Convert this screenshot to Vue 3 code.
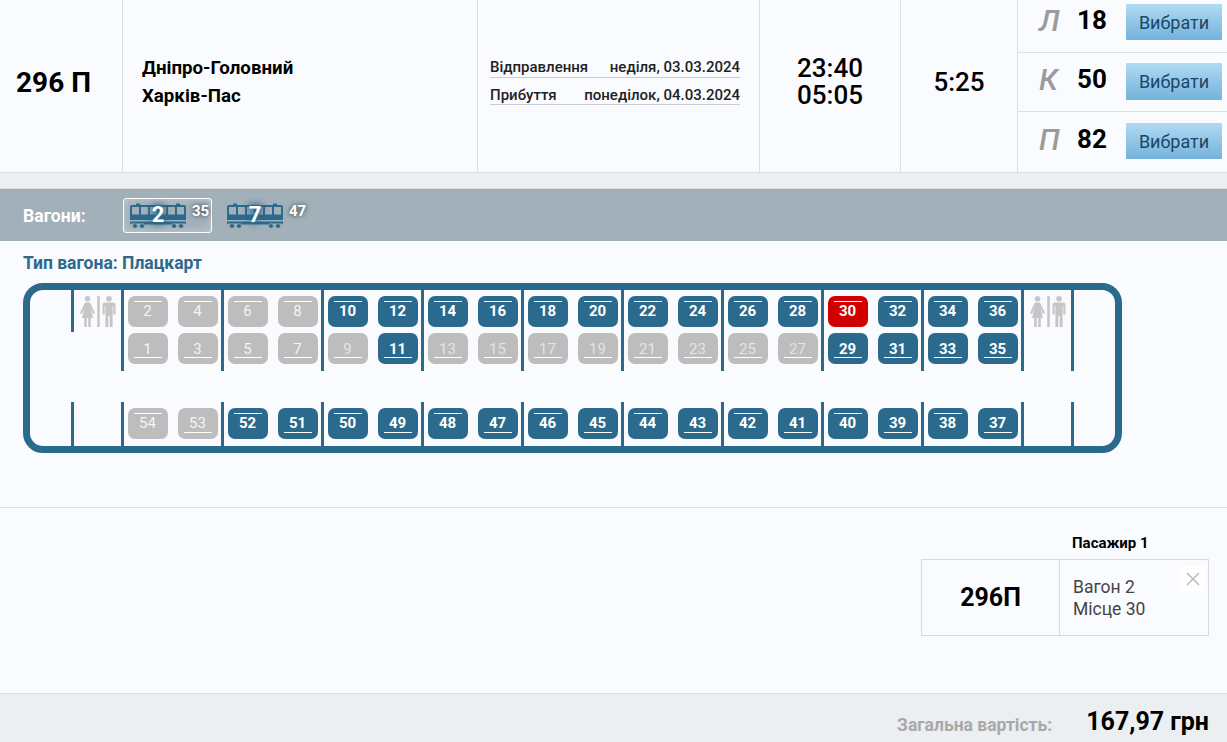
<template>
  <div class="page">
    <div class="train-row">
      <div class="cell num">296 П</div>
      <div class="cell route">
        <div>Дніпро-Головний</div>
        <div>Харків-Пас</div>
      </div>
      <div class="cell dates">
        <div class="date-line"><span>Відправлення</span><span>неділя, 03.03.2024</span></div>
        <div class="date-line"><span>Прибуття</span><span>понеділок, 04.03.2024</span></div>
      </div>
      <div class="cell times">
        <div>23:40</div>
        <div>05:05</div>
      </div>
      <div class="cell duration">5:25</div>
      <div class="classes">
        <div v-for="c in classes" :key="c.name" class="class-row" :class="c.cls">
          <span class="class-name">{{ c.name }}</span>
          <span class="class-count">{{ c.count }}</span>
          <button class="pick-btn">Вибрати</button>
        </div>
      </div>
    </div>
    <div class="gap-band"></div>

    <div class="wagons-bar">
      <span class="wagons-label">Вагони:</span>
      <div v-for="w in wagons" :key="w.num" class="wagon" :class="{ active: w.active }">
        <svg class="wagon-icon" width="56" height="25" viewBox="0 0 56 25">
          <path fill="#2c6a8d" fill-rule="evenodd" d="M2 2 L6 2 L6 0.5 L10 0.5 L10 2 L46 2 L46 0.5 L50 0.5 L50 2 L54 2 Q56 2 56 4 L56 17 L0 17 L0 4 Q0 2 2 2 Z M2 4 V11.5 H9 V4 Z M11 4 V11.5 H18 V4 Z M20 4 V11.5 H27 V4 Z M29 4 V11.5 H36 V4 Z M38 4 V11.5 H45 V4 Z M47 4 V11.5 H54 V4 Z" />
          <path fill="#2c6a8d" d="M0 18.5 H56 V21.5 L55 20.5 H1 L0 21.5 Z M14 20 H42 V21.5 H14 Z" />
          <circle v-for="x in [5, 12, 44, 51]" :key="x" :cx="x" cy="23" r="2" fill="#2c6a8d" />
          <rect v-for="x in [2.5, 9.5, 41.5, 48.5]" :key="'r' + x" :x="x" y="22.5" width="5" height="1" fill="#2c6a8d" />
        </svg>
        <span class="wagon-num">{{ w.num }}</span>
        <span class="wagon-free">{{ w.free }}</span>
      </div>
    </div>

    <div class="wagon-type">Тип вагона: Плацкарт</div>

    <div class="car">
      <div class="car-row upper">
        <div class="end-left short"></div>
        <div class="wc-cell">
          <svg class="wc" width="36" height="31" viewBox="0 0 36 31">
            <g fill="#c6c6c6">
              <circle cx="7.5" cy="2.8" r="2.8" />
              <path d="M5 6.5 H10 L15 17 L13 18 L10.5 12 L13 22 H10.8 V31 H8.2 V22 H6.8 V31 H4.2 V22 H2 L4.5 12 L2 18 L0 17 Z" />
              <rect x="17.2" y="0" width="2.6" height="31" />
              <circle cx="29" cy="2.8" r="2.8" />
              <path d="M24.5 6.5 H33.5 Q35.5 6.5 35.5 9 V18.5 H33.3 V10 H32.6 V31 H29.7 V20 H28.3 V31 H25.4 V10 H24.7 V18.5 H22.5 V9 Q22.5 6.5 24.5 6.5 Z" />
            </g>
          </svg>
        </div>
        <div v-for="(coupe, i) in upperCoupes" :key="i" class="coupe">
          <div class="seat-grid">
            <div v-for="s in coupe" :key="s" class="seat" :class="seatClass(s)">{{ s }}</div>
          </div>
        </div>
        <div class="wc-cell">
          <svg class="wc" width="36" height="31" viewBox="0 0 36 31">
            <g fill="#c6c6c6">
              <circle cx="7.5" cy="2.8" r="2.8" />
              <path d="M5 6.5 H10 L15 17 L13 18 L10.5 12 L13 22 H10.8 V31 H8.2 V22 H6.8 V31 H4.2 V22 H2 L4.5 12 L2 18 L0 17 Z" />
              <rect x="17.2" y="0" width="2.6" height="31" />
              <circle cx="29" cy="2.8" r="2.8" />
              <path d="M24.5 6.5 H33.5 Q35.5 6.5 35.5 9 V18.5 H33.3 V10 H32.6 V31 H29.7 V20 H28.3 V31 H25.4 V10 H24.7 V18.5 H22.5 V9 Q22.5 6.5 24.5 6.5 Z" />
            </g>
          </svg>
        </div>
        <div class="end-right"></div>
      </div>
      <div class="car-row lower">
        <div class="end-left"></div>
        <div class="wc-cell"></div>
        <div v-for="(coupe, i) in lowerCoupes" :key="i" class="coupe">
          <div class="seat-pair">
            <div v-for="s in coupe" :key="s" class="seat" :class="seatClass(s)">{{ s }}</div>
          </div>
        </div>
        <div class="wc-cell"></div>
        <div class="end-right"></div>
      </div>
    </div>

    <div class="selection">
      <div class="passenger">
        <div class="passenger-title">Пасажир 1</div>
        <div class="passenger-card">
          <div class="passenger-train">296П</div>
          <div class="passenger-seat">
            <div>Вагон 2</div>
            <div>Місце 30</div>
            <div class="close-btn">
              <svg width="14" height="14" viewBox="0 0 14 14">
                <path d="M1 1 L13 13 M13 1 L1 13" stroke="#b9b9c6" stroke-width="1.5" fill="none" />
              </svg>
            </div>
          </div>
        </div>
      </div>
    </div>

    <div class="total">
      <span class="total-label">Загальна вартість:</span>
      <span class="total-sum">167,97 грн</span>
    </div>
  </div>
</template>

<script setup>
const classes = [
  { name: 'Л', count: 18, cls: 'first' },
  { name: 'К', count: 50, cls: 'second' },
  { name: 'П', count: 82, cls: 'third' },
]

const wagons = [
  { num: 2, free: 35, active: true },
  { num: 7, free: 47, active: false },
]

const taken = [2, 4, 6, 8, 1, 3, 5, 7, 54, 53]
const faded = [9, 13, 15, 17, 19, 21, 23, 25, 27]

// верхній ряд: у кожному купе два верхніх і два нижніх місця
const upperCoupes = []
for (let i = 0; i < 9; i++) {
  const n = i * 4
  upperCoupes.push([n + 2, n + 4, n + 1, n + 3])
}

// бічні місця
const lowerCoupes = []
for (let i = 0; i < 9; i++) {
  lowerCoupes.push([54 - i * 2, 53 - i * 2])
}

function seatClass(s) {
  return {
    taken: taken.includes(s),
    faded: faded.includes(s),
    picked: s === 30,
    odd: s % 2 === 1,
  }
}
</script>

<style>
body {
  background: #fafbfe;
}
</style>

<style scoped>
.page {
  width: 1227px;
  height: 742px;
  overflow: hidden;
  position: relative;
  background: #fafbfe;
  font-family: Roboto, "Noto Sans", sans-serif;
  color: #000;
  display: flex;
  flex-direction: column;
}

.train-row {
  display: flex;
  height: 173px;
  flex: none;
  border-bottom: 1px solid #dcdfe3;
  box-sizing: border-box;
}

.cell {
  border-right: 1px solid #dcdfe3;
  box-sizing: border-box;
  display: flex;
  flex-direction: column;
  justify-content: center;
}

.num {
  width: 123px;
  font-size: 28px;
  font-weight: 700;
  align-items: center;
  padding: 0 15px 8px 0;
}

.route {
  width: 355px;
  padding: 0 0 8px 19px;
  font-size: 18.7px;
  font-weight: 700;
  line-height: 28px;
}

.dates {
  width: 282px;
  padding: 0 19px 17px 12px;
  font-size: 15px;
  font-weight: 500;
  color: #222;
}

.date-line {
  display: flex;
  justify-content: space-between;
  height: 27px;
  box-sizing: border-box;
  padding-top: 7px;
  line-height: 18px;
  border-bottom: 1px solid #c9ccd2;
}

.date-line + .date-line {
  padding-top: 9px;
  line-height: 17px;
}

.times {
  width: 141px;
  font-size: 26px;
  font-weight: 500;
  line-height: 27px;
  align-items: center;
  padding-bottom: 8px;
}

.duration {
  width: 117px;
  font-size: 26px;
  font-weight: 500;
  align-items: center;
  padding-bottom: 9px;
}

.classes {
  flex: 1;
  display: flex;
  flex-direction: column;
}

.class-row {
  display: flex;
  align-items: flex-start;
  border-bottom: 1px solid #dcdfe3;
  box-sizing: border-box;
}

.class-row:last-child {
  border-bottom: none;
}

.first {
  height: 53px;
  padding-top: 4px;
}

.second {
  height: 59px;
  padding-top: 10px;
}

.third {
  height: 60px;
  padding-top: 11px;
}

.class-name {
  width: 30px;
  margin: -1px 0 0 21px;
  font-size: 30px;
  font-style: italic;
  font-weight: 500;
  color: #9b9b9b;
  line-height: 36px;
}

.class-count {
  width: 46px;
  font-size: 26px;
  font-weight: 700;
  line-height: 32px;
  text-align: center;
}

.pick-btn {
  width: 96px;
  height: 36px;
  border: none;
  border-radius: 1px;
  padding: 0;
  margin-left: 11px;
  font-family: inherit;
  font-size: 18px;
  color: #1b4767;
  background: linear-gradient(#b0daf2, #74b2da);
}

.second .pick-btn {
  height: 37px;
}

.gap-band {
  height: 16px;
  flex: none;
  box-sizing: border-box;
  background: #eceff1;
  border-bottom: 1px solid #d9dcdf;
}

.wagons-bar {
  height: 52px;
  flex: none;
  background: #a2b0b9;
  display: flex;
  align-items: center;
  box-sizing: border-box;
  padding: 1px 0 0 23px;
}

.wagons-label {
  width: 100px;
  font-size: 17.6px;
  font-weight: 700;
  color: #fff;
}

.wagon {
  position: relative;
  width: 89px;
  height: 35px;
  box-sizing: border-box;
  margin-right: 8px;
  border: 1px solid transparent;
  border-radius: 3px;
  padding: 4px 0 0 6px;
}

.wagon.active {
  border-color: #fff;
  box-shadow: inset 0 0 8px rgba(255, 255, 255, 0.35);
}

.wagon-icon {
  display: block;
  filter: blur(0.3px);
}

.wagon-num {
  position: absolute;
  left: 27px;
  top: 3px;
  width: 14px;
  text-align: center;
  font-size: 22px;
  line-height: 26px;
  font-weight: 700;
  color: #fff;
  text-shadow: 0 0 6px #2c6a8d, 0 0 6px #2c6a8d, 0 0 8px #2c6a8d;
}

.wagon-free {
  position: absolute;
  left: 68px;
  top: 3px;
  font-size: 15px;
  line-height: 18px;
  font-weight: 700;
  color: #fff;
  text-shadow: 0 0 5px rgba(0, 0, 0, 0.75);
}

.wagon-type {
  flex: none;
  height: 42px;
  box-sizing: border-box;
  padding: 12px 0 0 23px;
  font-size: 17.5px;
  line-height: 20px;
  font-weight: 700;
  color: #2c6a8d;
}

.car {
  flex: none;
  width: 1099px;
  height: 170px;
  margin-left: 23px;
  box-sizing: border-box;
  border: 7px solid #2c6a8d;
  border-radius: 20px;
  display: flex;
  flex-direction: column;
  justify-content: space-between;
}

.car-row {
  display: flex;
  padding-left: 41px;
}

.upper {
  height: 81px;
}

.lower {
  height: 44px;
}

.end-left {
  width: 0;
}

.end-left,
.end-right {
  border-left: 3px solid #2c6a8d;
  margin-right: -3px;
}

.end-left.short {
  height: 42px;
}

.wc-cell {
  width: 50px;
  flex: none;
  box-sizing: border-box;
  padding: 6px 0 0 9px;
}

.wc {
  display: block;
  filter: blur(0.4px);
}

.coupe {
  width: 100px;
  flex: none;
  box-sizing: border-box;
  border-left: 3px solid #2c6a8d;
  padding: 6px 0 0 4px;
}

.coupe + .wc-cell {
  border-left: 3px solid #2c6a8d;
  padding-left: 6px;
}

.seat-grid {
  display: grid;
  grid-template-columns: 40px 40px;
  grid-auto-rows: 31px;
  column-gap: 10px;
  row-gap: 6px;
}

.seat-pair {
  display: flex;
  gap: 10px;
}

.seat {
  width: 40px;
  height: 31px;
  box-sizing: border-box;
  border-radius: 7px;
  padding-right: 1px;
  background: #2c6a8d;
  color: #fff;
  font-size: 15px;
  font-weight: 700;
  line-height: 30px;
  text-align: center;
  position: relative;
}

.seat::after {
  content: "";
  position: absolute;
  left: 6px;
  width: 28px;
  top: 5px;
  height: 1px;
  background: #fff;
}

.seat.odd {
  line-height: 32px;
}

.seat.odd::after {
  top: auto;
  bottom: 6px;
}

.lower .seat {
  line-height: 31px;
}

.seat.taken,
.seat.faded {
  background: #bdbdbd;
  font-weight: 400;
  color: #f4f4f4;
}

.seat.faded {
  color: #e4e4e4;
}

.seat.picked {
  background: #d00000;
}

.selection {
  margin-top: 54px;
  border-top: 1px solid #dcdfe3;
  height: 186px;
  flex: none;
  box-sizing: border-box;
  display: flex;
  justify-content: flex-end;
  padding-right: 18px;
}

.passenger {
  width: 288px;
}

.passenger-title {
  height: 51px;
  box-sizing: border-box;
  padding: 27px 0 0 151px;
  font-size: 15px;
  line-height: 16px;
  font-weight: 700;
}

.passenger-card {
  display: flex;
  height: 77px;
  box-sizing: border-box;
  border: 1px solid #d6dae0;
}

.passenger-train {
  width: 138px;
  flex: none;
  box-sizing: border-box;
  border-right: 1px solid #d6dae0;
  display: flex;
  align-items: center;
  justify-content: center;
  font-size: 25px;
  font-weight: 700;
}

.passenger-seat {
  flex: 1;
  position: relative;
  box-sizing: border-box;
  padding: 16px 0 0 13px;
  font-size: 17.5px;
  line-height: 22px;
  color: #444;
}

.close-btn {
  position: absolute;
  right: 3px;
  top: 6px;
  width: 25px;
  height: 25px;
  background: #fff;
  display: flex;
  align-items: center;
  justify-content: center;
}

.total {
  flex: 1;
  background: #eceff1;
  border-top: 1px solid #dcdfe3;
  display: flex;
  align-items: flex-start;
  justify-content: flex-end;
  padding-right: 18px;
}

.total-label {
  font-size: 17.5px;
  font-weight: 700;
  color: #a9a9a9;
  line-height: 22px;
  margin: 20px 34px 0 0;
}

.total-sum {
  font-size: 25px;
  font-weight: 700;
  line-height: 30px;
  margin-top: 13px;
}
</style>
